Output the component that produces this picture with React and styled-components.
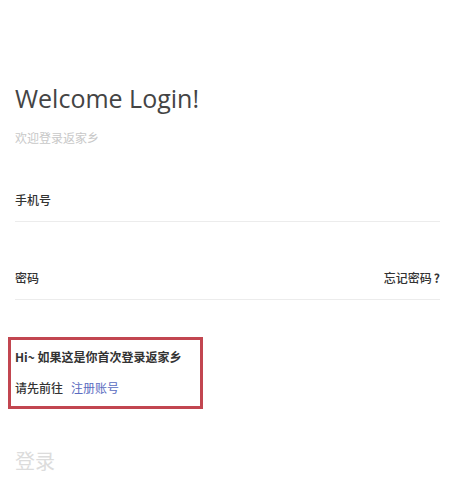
import React from "react";
import styled, { createGlobalStyle } from "styled-components";

const Global = createGlobalStyle`
  html, body { margin: 0; padding: 0; background: #fff; }
  body { font-family: "Noto Sans", "Noto Sans CJK SC", sans-serif; }
`;

const Page = styled.div`
  padding: 0 15px;
  width: 455px;
  box-sizing: border-box;
`;

const Title = styled.h1`
  margin: 82px 0 0;
  font-family: "Open Sans", "Noto Sans CJK SC", sans-serif;
  font-weight: 400;
  font-size: 25px;
  line-height: 32px;
  color: #444;
`;

const Subtitle = styled.div`
  margin-top: 16px;
  font-family: "Noto Sans CJK SC", sans-serif;
  font-size: 12px;
  line-height: 16px;
  color: #c8c8c8;
`;

const Field = styled.div`
  display: flex;
  justify-content: space-between;
  align-items: center;
  margin-top: ${(p) => p.$gap}px;
  padding-bottom: 13px;
  border-bottom: 1px solid #ececec;
`;

const Label = styled.span`
  font-family: "Noto Sans CJK SC", sans-serif;
  font-size: 12px;
  line-height: 16px;
  color: #333;
  font-weight: 500;
`;

const Question = styled.span`
  margin-left: 2px;
  font-weight: 700;
`;

const Notice = styled.div`
  margin: 37px 0 0 -7px;
  width: 195px;
  box-sizing: border-box;
  border: 3px solid #c24650;
  padding: 9px 0 10px 4px;
  display: flex;
  flex-direction: column;
  gap: 15px;
`;

const NoticeLine = styled.div`
  font-family: "Noto Sans CJK SC", sans-serif;
  font-size: 12px;
  line-height: 16px;
  color: #333;
  font-weight: ${(p) => (p.$bold ? 700 : 500)};
`;

const Link = styled.a`
  margin-left: 8px;
  color: #5a6cbf;
  text-decoration: none;
  font-weight: 400;
`;

const Submit = styled.div`
  margin-top: 40px;
  font-family: "Noto Sans CJK SC", sans-serif;
  font-size: 20px;
  line-height: 24px;
  color: #dcdcdc;
`;

export default function App() {
  return (
    <Page>
      <Global />
      <Title>Welcome Login!</Title>
      <Subtitle>欢迎登录返家乡</Subtitle>
      <Field $gap={46}>
        <Label>手机号</Label>
      </Field>
      <Field $gap={48}>
        <Label>密码</Label>
        <Label>
          忘记密码<Question>?</Question>
        </Label>
      </Field>
      <Notice>
        <NoticeLine $bold>Hi~ 如果这是你首次登录返家乡</NoticeLine>
        <NoticeLine>
          请先前往<Link href="#">注册账号</Link>
        </NoticeLine>
      </Notice>
      <Submit>登录</Submit>
    </Page>
  );
}
